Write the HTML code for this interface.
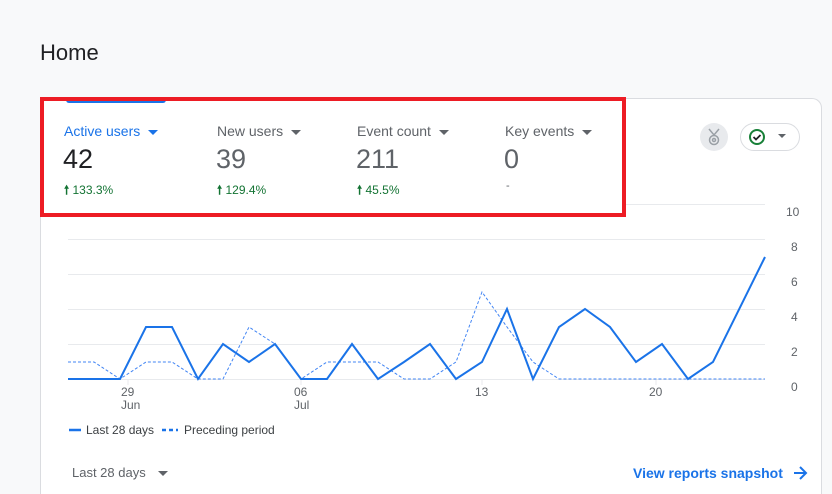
<!DOCTYPE html>
<html><head><style>
html,body{margin:0;width:832px;height:494px;overflow:hidden}
body{background:#f8f9fa;font-family:"Liberation Sans",Arial,sans-serif;position:relative}
.t{position:absolute;white-space:nowrap}
.card{position:absolute;left:40px;top:98px;width:782px;height:400px;background:#fff;border:1px solid #dadce0;border-bottom:none;border-radius:10px 10px 0 0;box-sizing:border-box}
.lab{font-size:14px;color:#5f6368}
.num{font-size:27px;color:#5f6368}
.pct{font-size:12px;color:#137333}
.tri{display:inline-block;width:0;height:0;border-left:5px solid transparent;border-right:5px solid transparent;border-top:5px solid #5f6368;vertical-align:middle;margin-left:8px}
</style></head><body>
<div class="t" style="left:40px;top:40px;font-size:22px;color:#202124">Home</div>
<div class="card" style="height:396px"></div>
<div style="position:absolute;left:66px;top:99px;width:100px;height:4px;background:#1a73e8;border-radius:0 0 3px 3px"></div>
<div class="t lab" style="left:64px;top:123px;color:#1a73e8">Active users<span class="tri" style="border-top-color:#1a73e8"></span></div>
<div class="t num" style="left:63px;top:144px;color:#202124">42</div>
<div class="t pct" style="left:64px;top:181px"><b>🠕</b> 133.3%</div>
<div class="t lab" style="left:217px;top:123px">New users<span class="tri"></span></div>
<div class="t num" style="left:216px;top:144px">39</div>
<div class="t pct" style="left:217px;top:181px"><b>🠕</b> 129.4%</div>
<div class="t lab" style="left:357px;top:123px">Event count<span class="tri"></span></div>
<div class="t num" style="left:356px;top:144px">211</div>
<div class="t pct" style="left:357px;top:181px"><b>🠕</b> 45.5%</div>
<div class="t lab" style="left:505px;top:123px">Key events<span class="tri"></span></div>
<div class="t num" style="left:504px;top:144px">0</div>
<div class="t" style="left:506px;top:180px;font-size:11px;color:#5f6368">-</div>
<div style="position:absolute;left:40px;top:97px;width:578px;height:112px;border:4px solid #ed1c24"></div>
<div style="position:absolute;left:700px;top:123px;width:28px;height:28px;border-radius:50%;background:#e8eaed"></div>
<svg style="position:absolute;left:705px;top:127px" width="18" height="20" fill="none" stroke="#9aa0a6" stroke-width="1.5"><path d="M4 2l5 6 5-6"/><circle cx="9" cy="13" r="4.5"/><circle cx="9" cy="13" r="1.5"/></svg>
<div style="position:absolute;left:740px;top:123px;width:58px;height:26px;border:1px solid #dadce0;border-radius:14px"></div>
<svg style="position:absolute;left:748px;top:128px" width="18" height="18"><circle cx="9" cy="9" r="7" fill="none" stroke="#188038" stroke-width="2"/><path d="M5.5 9l2.5 2.5 4.5-4.5" fill="none" stroke="#202124" stroke-width="1.8"/></svg>
<div style="position:absolute;left:778px;top:134px;border-left:4px solid transparent;border-right:4px solid transparent;border-top:4px solid #5f6368"></div>
<svg style="position:absolute;left:0;top:0" width="832" height="494">
<g stroke="#e8eaed" stroke-width="1">
<line x1="626" y1="204.5" x2="765" y2="204.5"/><line x1="68" y1="239.5" x2="765" y2="239.5"/><line x1="68" y1="274.5" x2="765" y2="274.5"/><line x1="68" y1="309.5" x2="765" y2="309.5"/><line x1="68" y1="344.5" x2="765" y2="344.5"/><line x1="68" y1="379.5" x2="765" y2="379.5"/>
<line x1="128" y1="379" x2="128" y2="385"/><line x1="301" y1="379" x2="301" y2="385"/><line x1="482" y1="379" x2="482" y2="385"/><line x1="656" y1="379" x2="656" y2="385"/>
</g>
<g font-size="12" fill="#5f6368" font-family="Liberation Sans">
<text x="786" y="216">10</text><text x="791" y="251">8</text><text x="791" y="286">6</text><text x="791" y="321">4</text><text x="791" y="356">2</text><text x="791" y="391">0</text>
<text x="121" y="396">29</text><text x="121" y="409">Jun</text><text x="294" y="396">06</text><text x="294" y="409">Jul</text><text x="475" y="396">13</text><text x="649" y="396">20</text>
</g>
<polyline fill="none" stroke="#4285f4" stroke-width="1" stroke-dasharray="3,2" points="68,362 94,362 120,379 146,362 172,362 198,379 223,379 249,327 275,344 301,379 327,362 352,362 378,362 404,379 430,379 456,362 482,292 507,327 533,362 559,379 765,379"/>
<polyline fill="none" stroke="#1a73e8" stroke-width="2" points="68,379 94,379 120,379 146,327 172,327 198,379 223,344 249,362 275,344 301,379 327,379 352,344 378,379 404,362 430,344 456,379 482,362 507,309 533,379 559,327 585,309 610,327 636,362 662,344 688,379 713,362 765,257"/>
<line x1="69" y1="430" x2="81" y2="430" stroke="#1a73e8" stroke-width="2.5"/>
<line x1="162" y1="430" x2="178" y2="430" stroke="#1a73e8" stroke-width="2.5" stroke-dasharray="4,3"/>
<text x="86" y="434" font-size="12" fill="#3c4043" font-family="Liberation Sans">Last 28 days</text>
<text x="184" y="434" font-size="12" fill="#3c4043" font-family="Liberation Sans">Preceding period</text>
<path d="M794 473h11M800 467l6 6-6 6" fill="none" stroke="#1a73e8" stroke-width="2"/>
</svg>
<div class="t" style="left:72px;top:465px;font-size:13px;color:#5f6368">Last 28 days<span class="tri" style="margin-left:12px"></span></div>
<div class="t" style="left:633px;top:465px;font-size:14px;color:#1a73e8;font-weight:bold">View reports snapshot</div>
</body></html>
